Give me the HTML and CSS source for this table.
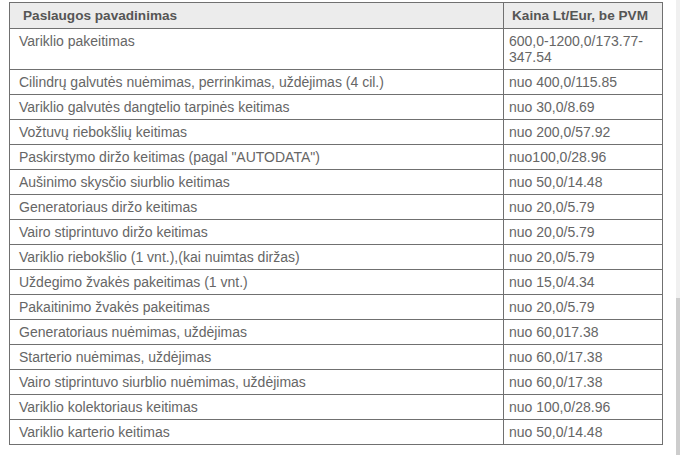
FILE: index.html
```html
<!DOCTYPE html>
<html lang="lt">
<head>
<meta charset="utf-8">
<link rel="stylesheet" href="styles.css">
</head>
<body>
<div class="page">
  <main class="content">
    <table class="prices">
      <thead>
        <tr><th class="name">Paslaugos pavadinimas</th><th class="price">Kaina Lt/Eur, be PVM</th></tr>
      </thead>
      <tbody>
        <tr class="tall"><td class="name">Variklio pakeitimas</td><td class="price">600,0-1200,0/173.77-347.54</td></tr>
        <tr><td class="name">Cilindrų galvutės nuėmimas, perrinkimas, uždėjimas (4 cil.)</td><td class="price">nuo 400,0/115.85</td></tr>
        <tr><td class="name">Variklio galvutės dangtelio tarpinės keitimas</td><td class="price">nuo 30,0/8.69</td></tr>
        <tr><td class="name">Vožtuvų riebokšlių keitimas</td><td class="price">nuo 200,0/57.92</td></tr>
        <tr><td class="name">Paskirstymo diržo keitimas (pagal "AUTODATA")</td><td class="price">nuo100,0/28.96</td></tr>
        <tr><td class="name">Aušinimo skysčio siurblio keitimas</td><td class="price">nuo 50,0/14.48</td></tr>
        <tr><td class="name">Generatoriaus diržo keitimas</td><td class="price">nuo 20,0/5.79</td></tr>
        <tr><td class="name">Vairo stiprintuvo diržo keitimas</td><td class="price">nuo 20,0/5.79</td></tr>
        <tr><td class="name">Variklio riebokšlio (1 vnt.),(kai nuimtas diržas)</td><td class="price">nuo 20,0/5.79</td></tr>
        <tr><td class="name">Uždegimo žvakės pakeitimas (1 vnt.)</td><td class="price">nuo 15,0/4.34</td></tr>
        <tr><td class="name">Pakaitinimo žvakės pakeitimas</td><td class="price">nuo 20,0/5.79</td></tr>
        <tr><td class="name">Generatoriaus nuėmimas, uždėjimas</td><td class="price">nuo 60,017.38</td></tr>
        <tr><td class="name">Starterio nuėmimas, uždėjimas</td><td class="price">nuo 60,0/17.38</td></tr>
        <tr><td class="name">Vairo stiprintuvo siurblio nuėmimas, uždėjimas</td><td class="price">nuo 60,0/17.38</td></tr>
        <tr><td class="name">Variklio kolektoriaus keitimas</td><td class="price">nuo 100,0/28.96</td></tr>
        <tr><td class="name">Variklio karterio keitimas</td><td class="price">nuo 50,0/14.48</td></tr>
      </tbody>
    </table>
  </main>
  <div class="scrollbar"><div class="thumb"></div></div>
</div>
</body>
</html>
```

FILE: styles.css
```css
html, body {
  margin: 0;
  padding: 0;
  background: #ffffff;
}
.page {
  display: flex;
  width: 680px;
  height: 455px;
  overflow: hidden;
}
.content {
  flex: 1;
  padding: 2px 0 0 9px;
}
.prices {
  border-collapse: collapse;
  width: 654px;
  font-family: "Liberation Sans", Arial, sans-serif;
  font-size: 14px;
  line-height: 16px;
  color: #666666;
}
.prices th,
.prices td {
  border: 1px solid #707070;
  text-align: left;
  vertical-align: top;
}
.prices th {
  background: #ececec;
  color: #555555;
  font-size: 13.6px;
  font-weight: bold;
  height: 16px;
  padding: 5px 5px 4px 13px;
}
.prices th.price {
  padding-left: 8px;
}
.prices td {
  height: 16px;
  padding: 4px 5px 4px 9px;
}
.prices td.price {
  width: 148px;
  padding-left: 5px;
}
.prices tr.tall td {
  height: 32px;
}
.scrollbar {
  width: 4px;
  background: #f0f0f0;
  display: flex;
  flex-direction: column;
  justify-content: flex-end;
}
.thumb {
  height: 157px;
  background: #cdcdcd;
}
```
